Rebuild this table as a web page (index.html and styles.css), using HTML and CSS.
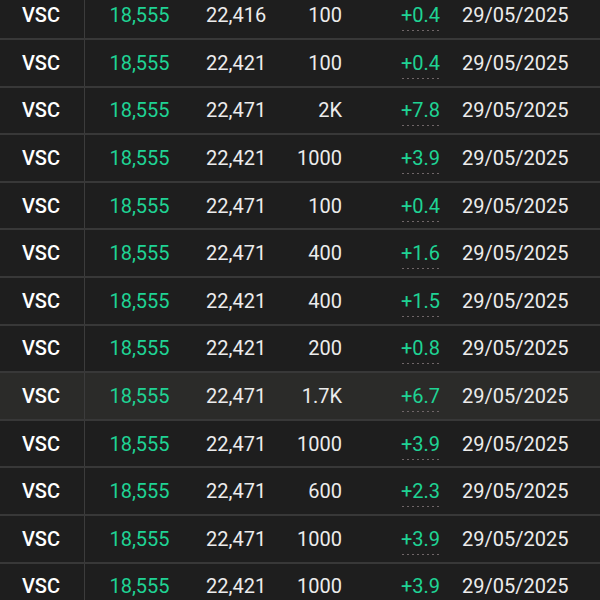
FILE: index.html
```html
<!DOCTYPE html>
<html>
<head>
<meta charset="utf-8">
<link rel="stylesheet" href="styles.css">
</head>
<body>
<div class="list">
  <div class="row"><div class="sym">VSC</div><div class="price">18,555</div><div class="ref">22,416</div><div class="vol">100</div><div class="chg"><span>+0.4</span></div><div class="date">29/05/2025</div></div>
  <div class="row"><div class="sym">VSC</div><div class="price">18,555</div><div class="ref">22,421</div><div class="vol">100</div><div class="chg"><span>+0.4</span></div><div class="date">29/05/2025</div></div>
  <div class="row"><div class="sym">VSC</div><div class="price">18,555</div><div class="ref">22,471</div><div class="vol">2K</div><div class="chg"><span>+7.8</span></div><div class="date">29/05/2025</div></div>
  <div class="row"><div class="sym">VSC</div><div class="price">18,555</div><div class="ref">22,421</div><div class="vol">1000</div><div class="chg"><span>+3.9</span></div><div class="date">29/05/2025</div></div>
  <div class="row"><div class="sym">VSC</div><div class="price">18,555</div><div class="ref">22,471</div><div class="vol">100</div><div class="chg"><span>+0.4</span></div><div class="date">29/05/2025</div></div>
  <div class="row"><div class="sym">VSC</div><div class="price">18,555</div><div class="ref">22,471</div><div class="vol">400</div><div class="chg"><span>+1.6</span></div><div class="date">29/05/2025</div></div>
  <div class="row"><div class="sym">VSC</div><div class="price">18,555</div><div class="ref">22,421</div><div class="vol">400</div><div class="chg"><span>+1.5</span></div><div class="date">29/05/2025</div></div>
  <div class="row"><div class="sym">VSC</div><div class="price">18,555</div><div class="ref">22,421</div><div class="vol">200</div><div class="chg"><span>+0.8</span></div><div class="date">29/05/2025</div></div>
  <div class="row active"><div class="sym">VSC</div><div class="price">18,555</div><div class="ref">22,471</div><div class="vol">1.7K</div><div class="chg"><span>+6.7</span></div><div class="date">29/05/2025</div></div>
  <div class="row"><div class="sym">VSC</div><div class="price">18,555</div><div class="ref">22,471</div><div class="vol">1000</div><div class="chg"><span>+3.9</span></div><div class="date">29/05/2025</div></div>
  <div class="row"><div class="sym">VSC</div><div class="price">18,555</div><div class="ref">22,471</div><div class="vol">600</div><div class="chg"><span>+2.3</span></div><div class="date">29/05/2025</div></div>
  <div class="row"><div class="sym">VSC</div><div class="price">18,555</div><div class="ref">22,471</div><div class="vol">1000</div><div class="chg"><span>+3.9</span></div><div class="date">29/05/2025</div></div>
  <div class="row"><div class="sym">VSC</div><div class="price">18,555</div><div class="ref">22,421</div><div class="vol">1000</div><div class="chg"><span>+3.9</span></div><div class="date">29/05/2025</div></div>
</div>
</body>
</html>
```

FILE: styles.css
```css
html, body {
  margin: 0;
  padding: 0;
  background: #1e1e1e;
  overflow: hidden;
}
body {
  font-family: Roboto, "Liberation Sans", sans-serif;
  font-size: 20px;
  color: #ececec;
}
.list {
  margin-top: -7.5px;
}
.row {
  display: grid;
  grid-template-columns: 85px 108px 90px 59px 119px 1fr;
  height: 47.6px;
  box-sizing: border-box;
  border-bottom: 2px solid #383838;
  align-items: stretch;
}
.row.active {
  background: #2b2b29;
}
.row > div {
  display: flex;
  align-items: center;
  white-space: nowrap;
}
.sym {
  justify-content: center;
  font-weight: 500;
  color: #ffffff;
  border-right: 1px solid #3c3c3c;
  padding-right: 2px;
}
.price {
  justify-content: center;
  color: #1fd394;
  padding-left: 1px;
}
.ref {
  padding-left: 13px;
}
.vol {
  justify-content: flex-end;
}
.chg {
  padding-left: 59px;
  color: #1fd394;
}
.chg span {
  padding-bottom: 4px;
  margin-bottom: -4px;
  background-image: linear-gradient(to right, #6f6668 2px, transparent 2px);
  background-size: 5px 1px;
  background-repeat: repeat-x;
  background-position: 1px bottom;
}
.date {
  padding-left: 1px;
}
```
